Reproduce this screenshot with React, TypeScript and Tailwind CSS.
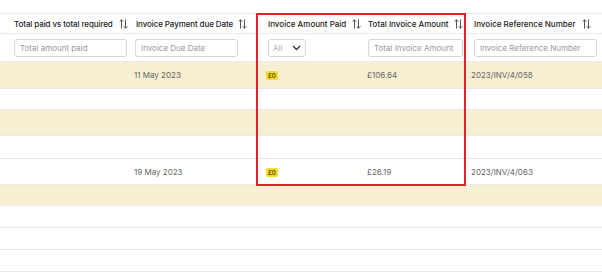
import React from "react";

const SortIcon = () => (
  <svg width="9" height="10" viewBox="0 0 9 10" fill="none" stroke="#555" strokeWidth="1" className="shrink-0">
    <path d="M2.5 9.5V0.8M0.6 2.7L2.5 0.8L4.4 2.7" />
    <path d="M6.5 0.5V9.2M4.6 7.3L6.5 9.2L8.4 7.3" />
  </svg>
);

const cols = "grid grid-cols-[130px_132px_100px_106px_134px]";

type Row = { h: string; beige: boolean; data?: { date: string; amount: string; ref: string } };

const rows: Row[] = [
  { h: "h-[27px]", beige: true, data: { date: "11 May 2023", amount: "£106.64", ref: "2023/INV/4/058" } },
  { h: "h-[21px]", beige: false },
  { h: "h-[26px]", beige: true },
  { h: "h-[23px]", beige: false },
  { h: "h-[26px]", beige: false, data: { date: "19 May 2023", amount: "£26.19", ref: "2023/INV/4/063" } },
  { h: "h-[21px]", beige: true },
  { h: "h-[22px]", beige: false },
  { h: "h-[22px]", beige: false },
  { h: "h-[22px]", beige: false },
];

export default function App() {
  return (
    <div className="relative w-[602px] h-[278px] bg-white overflow-hidden text-[#333]" style={{ fontFamily: "Inter, 'Open Sans', sans-serif" }}>
      <div className="h-[13px]" />
      <div className={`${cols} h-[21px] items-center border-t border-b border-[#ebebeb] text-[8px] font-medium text-[#222] whitespace-nowrap`}>
        <div className="flex items-center gap-[6px] pl-[14px] tracking-[-0.1px]">Total paid vs total required <SortIcon /></div>
        <div className="flex items-center gap-[5px] pl-[6px] tracking-[-0.1px]">Invoice Payment due Date <SortIcon /></div>
        <div className="flex items-center gap-[6px] pl-[6px]">Invoice Amount Paid <SortIcon /></div>
        <div className="flex items-center gap-[6px] pl-[6px]">Total Invoice Amount <SortIcon /></div>
        <div className="flex items-center gap-[6px] pl-[6px]">Invoice Reference Number <SortIcon /></div>
      </div>
      <div className={`${cols} h-[28px] items-center border-b border-[#ebebeb] text-[8px] text-[#999] whitespace-nowrap`}>
        <div className="pl-[14px] pr-[3px]">
          <div className="h-[18px] border border-[#d6d6d6] rounded-[3px] flex items-center px-[5px]">Total amount paid</div>
        </div>
        <div className="pl-[5px] pr-[24px]">
          <div className="h-[18px] border border-[#d6d6d6] rounded-[3px] flex items-center px-[5px]">Invoice Due Date</div>
        </div>
        <div className="pl-[6px]">
          <div className="w-[38px] h-[18px] border border-[#d6d6d6] rounded-[3px] flex items-center justify-between px-[4px]">
            <span className="text-[#aaa]">All</span>
            <svg width="9" height="6" viewBox="0 0 9 6" fill="none" stroke="#333" strokeWidth="1.3"><path d="M1 1L4.5 4.5L8 1" /></svg>
          </div>
        </div>
        <div className="pl-[6px] pr-[5px]">
          <div className="h-[18px] border border-[#d6d6d6] rounded-[3px] flex items-center px-[5px]">Total Invoice Amount</div>
        </div>
        <div className="pl-[6px] pr-[5px]">
          <div className="h-[18px] border border-[#d6d6d6] rounded-[3px] flex items-center px-[5px]">Invoice Reference Number</div>
        </div>
      </div>
      {rows.map((r, i) => (
        <div key={i} className={`${cols} ${r.h} items-center border-b border-[#e8e8e8] text-[8px] text-[#666] whitespace-nowrap ${r.beige ? "bg-[#f6efd1]" : "bg-white"}`}>
          <div />
          <div className="pl-[4px]">{r.data?.date}</div>
          <div className="pl-[4px]">
            {r.data && (
              <span className="inline-flex items-center h-[9px] px-[2px] rounded-[2px] bg-[#f3d92e] text-[6px] text-[#5a4a00] font-semibold">£0</span>
            )}
          </div>
          <div className="pl-[5px]">{r.data?.amount}</div>
          <div className="pl-[3px]">{r.data?.ref}</div>
        </div>
      ))}
      <div className="absolute left-[256px] top-[13px] w-[210px] h-[173px] border-2 border-[#e5202a] pointer-events-none" />
    </div>
  );
}
